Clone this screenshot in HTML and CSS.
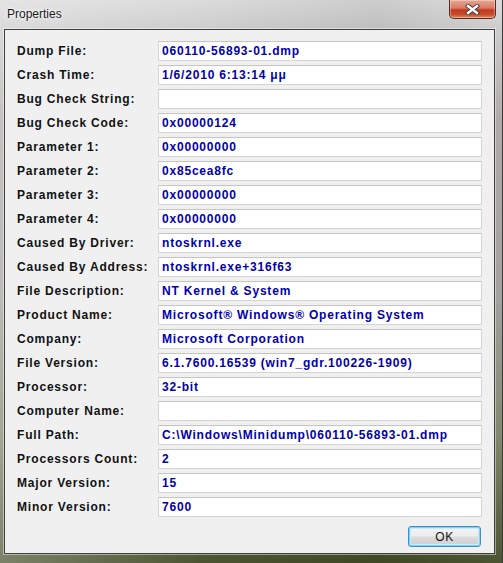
FILE: index.html
```html
<!DOCTYPE html>
<html lang="en">
<head>
  <meta charset="UTF-8" />
  <title>Properties</title>
  <link rel="stylesheet" href="styles.css">
</head>
<body>
  <div class="window">
    <div class="titlebar">
      <span class="title">Properties</span>
      <button class="close" title="Close">
        <svg width="15" height="11" viewBox="0 0 15 11">
          <path d="M3 2 L12 9 M12 2 L3 9" stroke="#3a3a3a" stroke-width="4.2" stroke-linecap="square" fill="none"/>
          <path d="M3 2 L12 9 M12 2 L3 9" stroke="#fff" stroke-width="2.4" stroke-linecap="square" fill="none"/>
        </svg>
      </button>
    </div>

    <div class="client">
      <div class="props">
        <label>Dump File:</label><div class="field">060110-56893-01.dmp</div>
        <label>Crash Time:</label><div class="field">1/6/2010 6:13:14 μμ</div>
        <label>Bug Check String:</label><div class="field"></div>
        <label>Bug Check Code:</label><div class="field">0x00000124</div>
        <label>Parameter 1:</label><div class="field">0x00000000</div>
        <label>Parameter 2:</label><div class="field">0x85cea8fc</div>
        <label>Parameter 3:</label><div class="field">0x00000000</div>
        <label>Parameter 4:</label><div class="field">0x00000000</div>
        <label>Caused By Driver:</label><div class="field">ntoskrnl.exe</div>
        <label>Caused By Address:</label><div class="field">ntoskrnl.exe+316f63</div>
        <label>File Description:</label><div class="field">NT Kernel &amp; System</div>
        <label>Product Name:</label><div class="field">Microsoft® Windows® Operating System</div>
        <label>Company:</label><div class="field">Microsoft Corporation</div>
        <label>File Version:</label><div class="field">6.1.7600.16539 (win7_gdr.100226-1909)</div>
        <label>Processor:</label><div class="field">32-bit</div>
        <label>Computer Name:</label><div class="field"></div>
        <label>Full Path:</label><div class="field">C:\Windows\Minidump\060110-56893-01.dmp</div>
        <label>Processors Count:</label><div class="field">2</div>
        <label>Major Version:</label><div class="field">15</div>
        <label>Minor Version:</label><div class="field">7600</div>
      </div>
      <div class="actions">
        <button class="ok">OK</button>
      </div>
    </div>
  </div>
</body>
</html>
```

FILE: styles.css
```css
* {
  box-sizing: border-box;
}
body {
  margin: 0;
  background: #4a5230;
}
.window {
  width: 503px;
  height: 563px;
  display: flex;
  flex-direction: column;
  padding: 0 8px 9px 4px;
  background:
    linear-gradient(90deg, rgba(255, 255, 255, 0.3), rgba(255, 255, 255, 0.05) 40%, rgba(0, 0, 0, 0.06) 75%, rgba(255, 255, 255, 0.05)),
    linear-gradient(180deg, #dadada 0, #cacaca 30px, #ada6a6 120px, #9d9d99 300px, #7a8064 440px, #414b26 563px);
  box-shadow: inset -1px 0 0 #3a3a3a;
}
.titlebar {
  height: 29px;
  flex: none;
  display: flex;
  justify-content: space-between;
  align-items: flex-start;
}
.title {
  margin: 7px 0 0 3px;
  font: 12px "Liberation Sans", Arial, sans-serif;
  color: #1a1a1a;
  text-shadow: 0 0 6px #fff, 0 0 3px #fff;
}
.close {
  width: 47px;
  height: 19px;
  margin-right: -1px;
  padding: 0;
  display: flex;
  align-items: center;
  justify-content: center;
  border: 1px solid #5a2a22;
  border-top: none;
  border-radius: 0 0 5px 5px;
  background: linear-gradient(180deg, #e6a793 0, #d77b66 45%, #c2381e 55%, #c84a2a 80%, #e08a5a 100%);
  box-shadow: inset 0 0 0 1px rgba(255, 255, 255, 0.35);
}
.client {
  flex: 1;
  display: flex;
  flex-direction: column;
  background: #f0f0f0;
  border: 1px solid #3f3f3f;
  box-shadow: 0 0 0 1px rgba(255, 255, 255, 0.45);
  padding: 11px 12px 6px 12px;
}
.props {
  display: grid;
  grid-template-columns: 141px 324px;
  row-gap: 4px;
  font: bold 12px "Liberation Sans", Arial, sans-serif;
  letter-spacing: 0.8px;
}
.props label {
  height: 20px;
  line-height: 20px;
  color: #111;
}
.field {
  height: 20px;
  line-height: 18px;
  padding-left: 3px;
  background: #fff;
  border: 1px solid #d5d5d5;
  border-top-color: #c4c4c4;
  color: #0000b0;
  white-space: nowrap;
  overflow: hidden;
}
.actions {
  display: flex;
  justify-content: flex-end;
  margin-top: 9px;
  padding-right: 1px;
}
.ok {
  width: 73px;
  height: 21px;
  padding: 0;
  border: 1px solid #3c8fc8;
  border-radius: 3px;
  background: linear-gradient(180deg, #f4f4f4 0, #ececec 48%, #dcdcdc 52%, #cfcfcf 100%);
  box-shadow: inset 0 0 0 1px #7fd2f6, inset 0 0 0 2px #c6ecfb;
  font: 12px "Liberation Sans", Arial, sans-serif;
  letter-spacing: 0.5px;
  color: #111;
}
```
